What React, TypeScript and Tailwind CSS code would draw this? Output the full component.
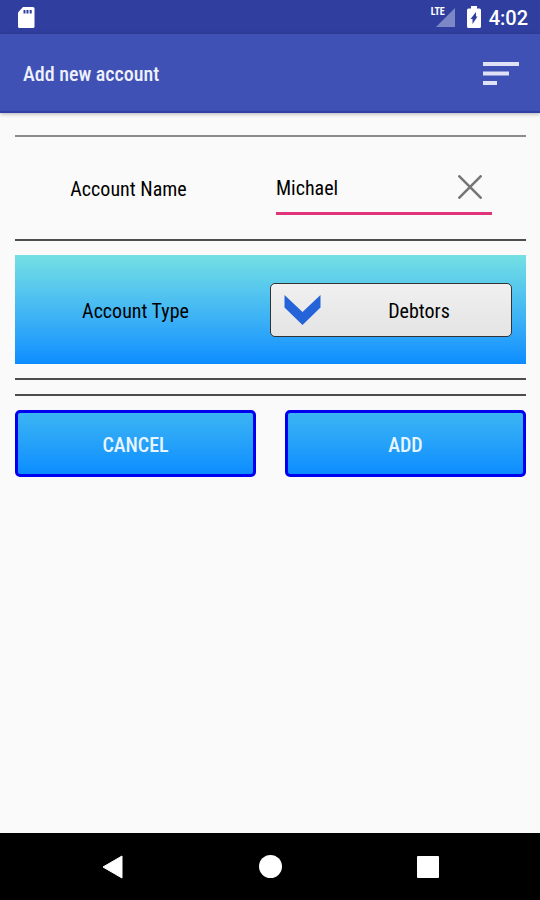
import { useState } from 'react'

function StatusBar() {
  return (
    <div className="flex h-[34px] items-center justify-between bg-[#303f9f] pr-3 pl-[17px] text-white">
      <svg className="h-[21px] w-[18px]" viewBox="0 0 18 21" aria-label="SD card">
        <path d="M6 0h10a1.500 1.500 0 0 1 1.500 1.500v18a1.500 1.500 0 0 1-1.500 1.500H2.500A1.500 1.500 0 0 1 1 19.500V5.500z" fill="currentColor" />
        <path d="M6.500 3h2v3.500h-2zM9.500 3h2v3.500h-2zM12.700 3h2v3.500h-2z" fill="#303f9f" />
      </svg>
      <div className="flex items-center">
        <div className="relative mr-3 h-5 w-6">
          <svg className="h-5 w-6" viewBox="0 0 24 20" aria-label="Mobile signal">
            <path d="M24 1v19H5z" fill="#7c87c6" />
          </svg>
          <span className="absolute top-0 left-0 text-[10px] leading-[10px] font-bold">LTE</span>
        </div>
        <svg className="mr-2 h-[22px] w-[14px]" viewBox="0 0 14 22" aria-label="Battery charging">
          <path d="M4 0h6v2.500h2.500A1.500 1.500 0 0 1 14 4v16.500a1.500 1.500 0 0 1-1.500 1.500h-11A1.500 1.500 0 0 1 0 20.500V4a1.500 1.500 0 0 1 1.500-1.500H4z" fill="currentColor" />
          <path d="M9 6v4.500h1.500L5.500 18v-5H3.500z" fill="#303f9f" />
        </svg>
        <span className="pt-0.5 font-[Roboto] text-xl leading-6 font-medium">4:02</span>
      </div>
    </div>
  )
}

function AppBar() {
  return (
    <header className="flex h-[79px] items-center justify-between border-b-2 border-[#2f3fa6] bg-[#3f51b5] pt-0.5 pr-[21px] pl-[23px] shadow-[0_1px_4px_rgba(0,0,0,0.3)]">
      <h1 className="text-xl leading-6 font-medium text-[#eef0fb]">Add new account</h1>
      <button type="button" aria-label="Sort" className="text-[#dfe2f6]">
        <svg className="h-6 w-9" viewBox="0 0 36 24" fill="currentColor">
          <path d="M0 0h36v4H0zM0 9.500h26v4H0zM0 19h14v4H0z" />
        </svg>
      </button>
    </header>
  )
}

function NavBar() {
  return (
    <nav className="grid h-[67px] grid-cols-[1fr_135px_180px_135px_1fr] items-center bg-black text-white">
      <button type="button" aria-label="Back" className="col-start-2 flex justify-center">
        <svg className="h-6 w-6" viewBox="0 0 24 24">
          <path d="M21 1v22L2 12z" fill="currentColor" stroke="currentColor" strokeLinejoin="round" />
        </svg>
      </button>
      <button type="button" aria-label="Home" className="flex justify-center">
        <span className="size-[23px] rounded-full bg-white" />
      </button>
      <button type="button" aria-label="Recent apps" className="flex justify-center">
        <span className="size-[22px] rounded-[1px] bg-white" />
      </button>
    </nav>
  )
}

export default function App() {
  const [name, setName] = useState('Michael')
  const [type, setType] = useState('Debtors')

  return (
    <div className="flex min-h-screen flex-col bg-[#fafafa] font-['Roboto_Condensed',Roboto,sans-serif] text-black">
      <StatusBar />
      <AppBar />

      <form className="flex-1 pt-[22px] pr-3.5 pl-[15px]" onSubmit={(e) => e.preventDefault()}>
        <div className="flex h-[106px] items-center border-t-2 border-b-2 border-t-[#8c8c8c] border-b-[#4d4d4d]">
          <label htmlFor="account-name" className="flex-1 pt-0.5 text-center text-xl leading-6">
            Account Name
          </label>
          <div className="mr-[34px] ml-[34px] flex h-[54px] w-[216px] items-center justify-between border-b-[3px] border-[#e0357a] pr-2.5">
            <input
              id="account-name"
              type="text"
              value={name}
              onChange={(e) => setName(e.target.value)}
              className="w-40 bg-transparent pt-0.5 text-xl leading-6 outline-none"
            />
            <button type="button" aria-label="Clear name" onClick={() => setName('')} className="text-[#757575]">
              <svg className="size-6" viewBox="0 0 24 24" fill="none" stroke="currentColor" strokeWidth="2.500">
                <path d="M0.500 0.500l23 23M23.500 0.500l-23 23" />
              </svg>
            </button>
          </div>
        </div>

        <div className="mt-3.5 flex h-[109px] items-center bg-linear-to-b from-[#74e0e3] to-[#0a8dff] pr-3.5">
          <label htmlFor="account-type" className="flex-1 pt-0.5 text-center text-xl leading-6">
            Account Type
          </label>
          <div className="relative ml-3.5 w-[242px]">
            <select
              id="account-type"
              value={type}
              onChange={(e) => setType(e.target.value)}
              className="h-[54px] w-full appearance-none rounded-[5px] border border-[#333] bg-linear-to-b from-[#f0f0f0] to-[#e4e4e4] pt-0.5 pl-14 text-center text-xl leading-6 outline-none"
            >
              <option>Debtors</option>
              <option>Creditors</option>
            </select>
            <svg className="pointer-events-none absolute top-3 left-3.5 h-[30px] w-[37px]" viewBox="0 0 37 30">
              <path d="M0.500 0L18.500 17L36.500 0v12.500L18.500 30L0.500 12.500z" fill="#2563d9" />
            </svg>
          </div>
        </div>

        <div className="mt-3.5 h-[18px] border-t-2 border-b-2 border-[#4d4d4d]" />

        <div className="mt-3.5 grid grid-cols-2 gap-[29px]">
          <button type="button" className="h-[67px] rounded-[5px] border-3 border-[#0000f0] bg-linear-to-b from-[#3bb4f3] to-[#0a8dff] pt-0.5 text-xl leading-6 font-medium text-[#e8f5ff]">
            CANCEL
          </button>
          <button type="submit" className="h-[67px] rounded-[5px] border-3 border-[#0000f0] bg-linear-to-b from-[#3bb4f3] to-[#0a8dff] pt-0.5 text-xl leading-6 font-medium text-[#e8f5ff]">
            ADD
          </button>
        </div>
      </form>

      <NavBar />
    </div>
  )
}
